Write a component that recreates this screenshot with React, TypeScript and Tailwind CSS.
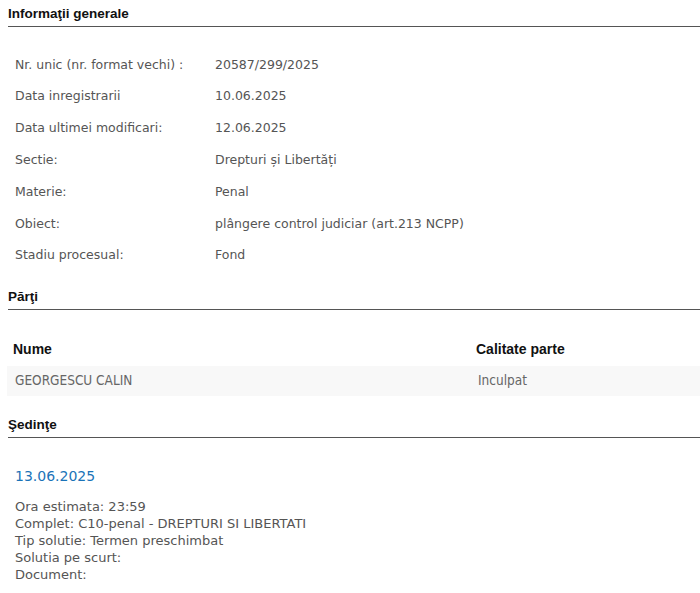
const info: [string, string][] = [
  ["Nr. unic (nr. format vechi) :", "20587/299/2025"],
  ["Data inregistrarii", "10.06.2025"],
  ["Data ultimei modificari:", "12.06.2025"],
  ["Sectie:", "Drepturi și Libertăți"],
  ["Materie:", "Penal"],
  ["Obiect:", "plângere control judiciar (art.213 NCPP)"],
  ["Stadiu procesual:", "Fond"],
];

const sedinta = [
  "Ora estimata: 23:59",
  "Complet: C10-penal - DREPTURI SI LIBERTATI",
  "Tip solutie: Termen preschimbat",
  "Solutia pe scurt:",
  "Document:",
];

function SectionTitle({ children }: { children: string }) {
  return (
    <div className="ml-2 h-[27px] border-b border-[#555] pt-[5px] text-[13.5px] font-bold leading-[18px] text-[#111] [font-family:'Liberation_Sans',Arial,sans-serif]">
      {children}
    </div>
  );
}

export default function App() {
  return (
    <div className="h-[593px] w-[700px] overflow-hidden bg-white text-[#555] [font-family:'DejaVu_Sans',Verdana,sans-serif]">
      <SectionTitle>Informaţii generale</SectionTitle>

      {/* Info rows */}
      <div className="pt-[22px] pl-[15px]">
        {info.map(([label, value]) => (
          <div key={label} className="flex h-[31.8px] items-center text-[12.5px]">
            <span className="w-[200px]">{label}</span>
            <span>{value}</span>
          </div>
        ))}
      </div>

      <div className="mt-[11px]">
        <SectionTitle>Părţi</SectionTitle>
      </div>

      {/* Parti table */}
      <div className="ml-[7px] mt-[24px]">
        <div className="flex h-[32px] items-center text-[14px] font-bold text-[#111] [font-family:'Liberation_Sans',Arial,sans-serif]">
          <span className="w-[469px] pl-[6px]">Nume</span>
          <span>Calitate parte</span>
        </div>
        <div className="flex h-[30px] items-center bg-[#f8f8f8] text-[13.5px] text-[#666] [font-family:'DejaVu_Sans_Condensed','DejaVu_Sans',sans-serif]">
          <span className="w-[471px] pl-[8px]">GEORGESCU CALIN</span>
          <span>Inculpat</span>
        </div>
      </div>

      <div className="mt-[15px]">
        <SectionTitle>Şedinţe</SectionTitle>
      </div>

      {/* Sedinte */}
      <div className="pl-[15px] pt-[29px]">
        <div className="text-[14px] leading-[18px] text-[#1a73b8]">13.06.2025</div>
        <div className="mt-[13px] text-[13px] leading-[17px]">
          {sedinta.map((line) => (
            <div key={line}>{line}</div>
          ))}
        </div>
      </div>
    </div>
  );
}
